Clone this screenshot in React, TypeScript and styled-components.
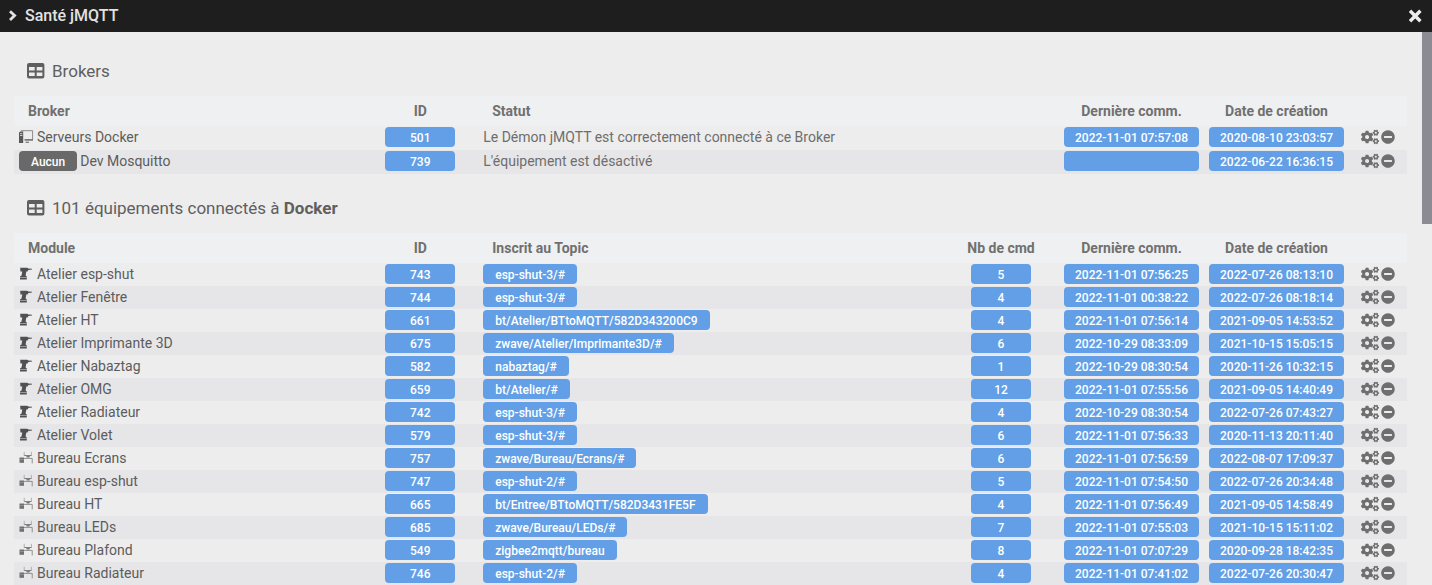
import React from 'react';
import styled, { createGlobalStyle } from 'styled-components';
import { FaCogs, FaMinusCircle } from 'react-icons/fa';

const GlobalStyle = createGlobalStyle`
  * { box-sizing: border-box; }
  body {
    margin: 0;
    background: #ededed;
    color: #6e6e6e;
    font-family: Roboto, "Liberation Sans", sans-serif;
    font-size: 14px;
    line-height: 20px;
  }
`;

const Dialog = styled.div`
  display: flex;
  flex-direction: column;
  height: 100vh;
`;

const TitleBar = styled.header`
  display: flex;
  align-items: center;
  gap: 7px;
  height: 32px;
  flex: none;
  padding: 0 10px 0 8px;
  background: #1e1e1e;
  color: #e2e2e2;
`;

const Title = styled.h1`
  flex: 1;
  margin: 0;
  font-size: 16px;
  font-weight: 500;
`;

const IconButton = styled.button<{ $color: string }>`
  display: inline-flex;
  padding: 0;
  border: 0;
  background: none;
  color: ${(p) => p.$color};
  cursor: pointer;
`;

const Body = styled.div`
  display: flex;
  flex: 1;
  min-height: 0;
`;

const Content = styled.main`
  flex: 1;
  min-width: 0;
  overflow: hidden;
  padding: 24px 15px 0 14px;
`;

const ScrollTrack = styled.div`
  width: 10px;
  flex: none;
  background: #ededed;
`;

const ScrollThumb = styled.div`
  height: 192px;
  background: #8c8b93;
`;

const Section = styled.section`
  margin-bottom: 19px;
`;

const Legend = styled.h2`
  display: flex;
  align-items: center;
  gap: 7px;
  height: 30px;
  margin: 0 0 10px;
  padding-left: 13px;
  font-size: 17px;
  font-weight: 400;
  color: #5f5f5f;
`;

const Table = styled.table`
  width: 100%;
  table-layout: fixed;
  border-collapse: collapse;
`;

const Col = styled.col<{ $width?: string }>`
  width: ${(p) => p.$width ?? 'auto'};
`;

const HeadCell = styled.th<{ $center?: boolean }>`
  height: 30px;
  padding: 0 14px;
  background: #eff0f2;
  font-weight: 700;
  color: #707070;
  white-space: nowrap;
  text-align: ${(p) => (p.$center ? 'center' : 'left')};
  ${(p) => p.$center && 'padding: 0;'}
`;

const Row = styled.tr<{ $height: number }>`
  height: ${(p) => p.$height}px;
  &:nth-child(even) { background: #e6e6e8; }
`;

const Cell = styled.td<{ $center?: boolean }>`
  padding: 1px 5px 2px;
  vertical-align: top;
  white-space: nowrap;
  text-align: ${(p) => (p.$center ? 'center' : 'left')};
`;

const NameLink = styled.a`
  display: flex;
  align-items: center;
  gap: 3px;
  height: 20px;
  color: #5c5c5c;
  text-decoration: none;
`;

const Tag = styled.span<{ $width?: number; $grey?: boolean }>`
  display: inline-block;
  vertical-align: top;
  height: 20px;
  padding: 0 12px;
  ${(p) => p.$width && `width: ${p.$width}px; padding: 0;`}
  border-radius: 4px;
  background: ${(p) => (p.$grey ? '#696969' : '#629fe6')};
  color: #ffffff;
  font-size: 12px;
  font-weight: 500;
  line-height: 22px;
  text-align: center;
`;

const Actions = styled.div`
  display: flex;
  align-items: center;
  gap: 2px;
  height: 20px;
  padding-left: 7px;
`;

const ChevronIcon = () => (
  <svg width="10" height="12" viewBox="0 0 10 12" aria-hidden="true">
    <path d="M2 1.2 6.600 5.600 2 10" fill="none" stroke="currentColor" strokeWidth="2.8" />
  </svg>
);

const CloseIcon = () => (
  <svg width="14" height="14" viewBox="0 0 14 14" aria-hidden="true">
    <path d="M3.200 3l8 8M11.200 3l-8 8" fill="none" stroke="currentColor" strokeWidth="3.4" strokeLinecap="square" />
  </svg>
);

const TableIcon = () => (
  <svg width="18" height="16" viewBox="0 0 18 16" aria-hidden="true">
    <path
      fill="currentColor"
      fillRule="evenodd"
      d="M2 0h13.400a2 2 0 0 1 2 2v11.400a2 2 0 0 1-2 2H2a2 2 0 0 1-2-2V2a2 2 0 0 1 2-2zM2 4v3.500h5.700V4zM9.700 4v3.500h5.700V4zM2 9.500v3.500h5.700V9.500zM9.700 9.500v3.500h5.700V9.500z"
    />
  </svg>
);

const ServerIcon = () => (
  <svg width="15" height="14" viewBox="0 0 15 14" aria-hidden="true">
    <path d="M2 .7h11.600v9" fill="none" stroke="#808080" strokeWidth=".9" />
    <path d="M5.500 9.900H14" stroke="#666" strokeWidth="1.500" />
    <path d="M0 2.500 1.200 1.500h3v11.500H0z" fill="#585858" />
    <path d="M1 3.700h2.400M1 5.500h2.400" stroke="#d8d8d8" strokeWidth=".9" />
    <path d="M6.500 12.300h3.500" stroke="#777" strokeWidth="1.200" />
  </svg>
);

const DrillIcon = () => (
  <svg width="15" height="14" viewBox="0 0 15 14" aria-hidden="true">
    <path d="M1.200 .8h7l1.200.8 3.600.2v.7l-3.600.4-.9 1.600H7.300L6.600 8.600l1.200.8v3.200H1V9.400l1.500-.8.800-4.100H1.400z" fill="#4f5052" />
    <path d="M1 10.500h6.800" stroke="#ccc" strokeWidth=".6" />
  </svg>
);

const DeskIcon = () => (
  <svg width="15" height="14" viewBox="0 0 15 14" aria-hidden="true">
    <path d="M5.200 .8v4M12.400 .8v4" stroke="#aaa" strokeWidth=".9" />
    <path d="M5.200 4.500h7.200" stroke="#808080" />
    <path d="M7.300 5h3.600L10.500 6.500H7.700z" fill="#777" />
    <path d="M5 7.400h8.200v5" stroke="#858585" strokeWidth=".9" fill="none" />
    <path d="M.5 6.500h4.500v5.300H.5z" fill="#6f7072" />
    <path d="M.5 8.600H5" stroke="#aaa" strokeWidth=".6" />
  </svg>
);

const icons = { server: ServerIcon, drill: DrillIcon, desk: DeskIcon };

const RowActions = ({ name }: { name: string }) => (
  <Actions>
    <IconButton type="button" $color="#6e6e6e" aria-label={`Configurer ${name}`}>
      <FaCogs size={18} />
    </IconButton>
    <IconButton type="button" $color="#6e6e6e" aria-label={`Supprimer ${name}`}>
      <FaMinusCircle size={14} />
    </IconButton>
  </Actions>
);

type Broker = { icon?: 'server'; name: string; id: number; status: string; last: string; created: string };

const brokers: Broker[] = [
  { icon: 'server', name: 'Serveurs Docker', id: 501, status: 'Le Démon jMQTT est correctement connecté à ce Broker', last: '2022-11-01 07:57:08', created: '2020-08-10 23:03:57' },
  { name: 'Dev Mosquitto', id: 739, status: "L'équipement est désactivé", last: '', created: '2022-06-22 16:36:15' },
];

type Device = [icon: 'drill' | 'desk', name: string, id: number, topic: string, count: number, last: string, created: string];

const devices: Device[] = [
  ['drill', 'Atelier esp-shut', 743, 'esp-shut-3/#', 5, '2022-11-01 07:56:25', '2022-07-26 08:13:10'],
  ['drill', 'Atelier Fenêtre', 744, 'esp-shut-3/#', 4, '2022-11-01 00:38:22', '2022-07-26 08:18:14'],
  ['drill', 'Atelier HT', 661, 'bt/Atelier/BTtoMQTT/582D343200C9', 4, '2022-11-01 07:56:14', '2021-09-05 14:53:52'],
  ['drill', 'Atelier Imprimante 3D', 675, 'zwave/Atelier/Imprimante3D/#', 6, '2022-10-29 08:33:09', '2021-10-15 15:05:15'],
  ['drill', 'Atelier Nabaztag', 582, 'nabaztag/#', 1, '2022-10-29 08:30:54', '2020-11-26 10:32:15'],
  ['drill', 'Atelier OMG', 659, 'bt/Atelier/#', 12, '2022-11-01 07:55:56', '2021-09-05 14:40:49'],
  ['drill', 'Atelier Radiateur', 742, 'esp-shut-3/#', 4, '2022-10-29 08:30:54', '2022-07-26 07:43:27'],
  ['drill', 'Atelier Volet', 579, 'esp-shut-3/#', 6, '2022-11-01 07:56:33', '2020-11-13 20:11:40'],
  ['desk', 'Bureau Ecrans', 757, 'zwave/Bureau/Ecrans/#', 6, '2022-11-01 07:56:59', '2022-08-07 17:09:37'],
  ['desk', 'Bureau esp-shut', 747, 'esp-shut-2/#', 5, '2022-11-01 07:54:50', '2022-07-26 20:34:48'],
  ['desk', 'Bureau HT', 665, 'bt/Entree/BTtoMQTT/582D3431FE5F', 4, '2022-11-01 07:56:49', '2021-09-05 14:58:49'],
  ['desk', 'Bureau LEDs', 685, 'zwave/Bureau/LEDs/#', 7, '2022-11-01 07:55:03', '2021-10-15 15:11:02'],
  ['desk', 'Bureau Plafond', 549, 'zigbee2mqtt/bureau', 8, '2022-11-01 07:07:29', '2020-09-28 18:42:35'],
  ['desk', 'Bureau Radiateur', 746, 'esp-shut-2/#', 4, '2022-11-01 07:41:02', '2022-07-26 20:30:47'],
];

const NameCell = ({ icon, name }: { icon?: keyof typeof icons; name: string }) => {
  const Icon = icon ? icons[icon] : null;
  return (
    <Cell>
      <NameLink href="#">
        {Icon ? <Icon /> : <Tag $grey>Aucun</Tag>}
        <span>{name}</span>
      </NameLink>
    </Cell>
  );
};

export default function App() {
  return (
    <>
      <GlobalStyle />
      <Dialog role="dialog" aria-labelledby="dialog-title">
        <TitleBar>
          <ChevronIcon />
          <Title id="dialog-title">Santé jMQTT</Title>
          <IconButton type="button" $color="#ededed" aria-label="Fermer">
            <CloseIcon />
          </IconButton>
        </TitleBar>
        <Body>
          <Content>
            <Section>
              <Legend>
                <TableIcon />
                <span>Brokers</span>
              </Legend>
              <Table>
                <colgroup>
                  <Col $width="25%" />
                  <Col $width="116px" />
                  <Col />
                  <Col $width="145px" />
                  <Col $width="145px" />
                  <Col $width="58px" />
                </colgroup>
                <thead>
                  <tr>
                    <HeadCell>Broker</HeadCell>
                    <HeadCell $center>ID</HeadCell>
                    <HeadCell>Statut</HeadCell>
                    <HeadCell $center>Dernière comm.</HeadCell>
                    <HeadCell $center>Date de création</HeadCell>
                    <HeadCell />
                  </tr>
                </thead>
                <tbody>
                  {brokers.map((b) => (
                    <Row key={b.id} $height={24}>
                      <NameCell icon={b.icon} name={b.name} />
                      <Cell $center><Tag $width={70}>{b.id}</Tag></Cell>
                      <Cell>{b.status}</Cell>
                      <Cell $center><Tag $width={135}>{b.last}</Tag></Cell>
                      <Cell $center><Tag $width={135}>{b.created}</Tag></Cell>
                      <Cell><RowActions name={b.name} /></Cell>
                    </Row>
                  ))}
                </tbody>
              </Table>
            </Section>
            <Section>
              <Legend>
                <TableIcon />
                <span>101 équipements connectés à <b>Docker</b></span>
              </Legend>
              <Table>
                <colgroup>
                  <Col $width="25%" />
                  <Col $width="116px" />
                  <Col />
                  <Col $width="116px" />
                  <Col $width="145px" />
                  <Col $width="145px" />
                  <Col $width="58px" />
                </colgroup>
                <thead>
                  <tr>
                    <HeadCell>Module</HeadCell>
                    <HeadCell $center>ID</HeadCell>
                    <HeadCell>Inscrit au Topic</HeadCell>
                    <HeadCell $center>Nb de cmd</HeadCell>
                    <HeadCell $center>Dernière comm.</HeadCell>
                    <HeadCell $center>Date de création</HeadCell>
                    <HeadCell />
                  </tr>
                </thead>
                <tbody>
                  {devices.map(([icon, name, id, topic, count, last, created]) => (
                    <Row key={id} $height={23}>
                      <NameCell icon={icon} name={name} />
                      <Cell $center><Tag $width={70}>{id}</Tag></Cell>
                      <Cell><Tag>{topic}</Tag></Cell>
                      <Cell $center><Tag $width={60}>{count}</Tag></Cell>
                      <Cell $center><Tag $width={135}>{last}</Tag></Cell>
                      <Cell $center><Tag $width={135}>{created}</Tag></Cell>
                      <Cell><RowActions name={name} /></Cell>
                    </Row>
                  ))}
                </tbody>
              </Table>
            </Section>
          </Content>
          <ScrollTrack aria-hidden="true">
            <ScrollThumb />
          </ScrollTrack>
        </Body>
      </Dialog>
    </>
  );
}
